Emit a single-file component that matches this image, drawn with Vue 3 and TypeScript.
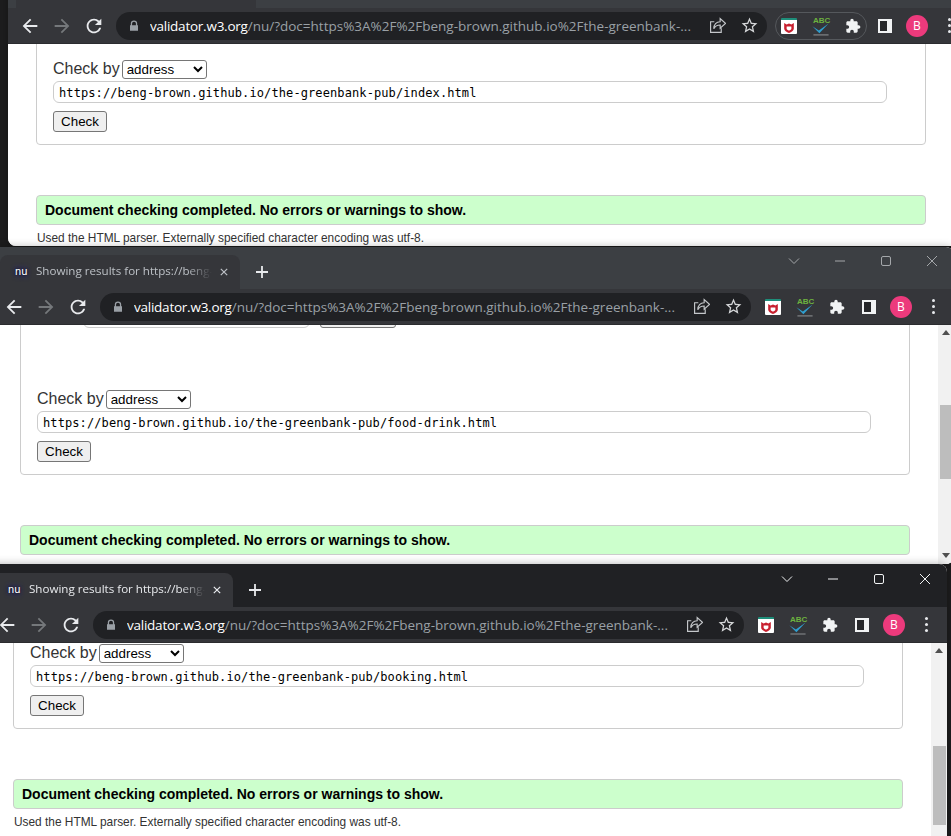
<script setup lang="ts">
interface BrowserWindow {
  id: string
  left: number
  top: number
  height: number
  scroll: number
  file: string
  focused: boolean
  pill: boolean
  hasTab: boolean
  hasNote: boolean
  thumbTop: number
  thumbHeight: number
}

const windows: BrowserWindow[] = [
  { id: 'w1', left: 8, top: -34, height: 280, scroll: -87, file: 'index.html', focused: false, pill: true, hasTab: false, hasNote: true, thumbTop: 60, thumbHeight: 74 },
  { id: 'w2', left: -8, top: 247, height: 317, scroll: -38, file: 'food-drink.html', focused: false, pill: false, hasTab: true, hasNote: false, thumbTop: 80, thumbHeight: 74 },
  { id: 'w3', left: -15, top: 564, height: 330, scroll: -102, file: 'booking.html', focused: true, pill: false, hasTab: true, hasNote: true, thumbTop: 103, thumbHeight: 79 }
]

const base = 'https://beng-brown.github.io/the-greenbank-pub/'
</script>

<template>
  <main class="desktop">
    <section
      v-for="win in windows"
      :key="win.id"
      class="window"
      :class="{ focused: win.focused }"
      :style="{ left: win.left + 'px', top: win.top + 'px', height: win.height + 'px' }"
    >
      <header class="tabstrip">
        <div class="tab">
          <template v-if="win.hasTab">
            <span class="favicon">nu</span>
            <span class="tab-title">Showing results for https://beng-</span>
            <svg class="tab-close" viewBox="0 0 10 10"><path d="M1 1l8 8M9 1l-8 8" /></svg>
          </template>
        </div>
        <svg class="new-tab" viewBox="0 0 12 12"><path d="M6 0v12M0 6h12" /></svg>
        <div class="controls">
          <svg viewBox="0 0 12 12"><path d="M1 3.5l5 5 5-5" /></svg>
          <svg viewBox="0 0 12 12"><path d="M1 6h10" /></svg>
          <svg viewBox="0 0 12 12"><rect x="1.5" y="1.5" width="9" height="9" rx="1.5" /></svg>
          <svg viewBox="0 0 12 12"><path d="M1 1l10 10M11 1L1 11" /></svg>
        </div>
      </header>

      <nav class="toolbar">
        <button class="tool">
          <svg class="nav-icon" viewBox="0 0 24 24"><path d="M20 11H7.83l5.59-5.59L12 4l-8 8 8 8 1.41-1.41L7.83 13H20v-2z" /></svg>
        </button>
        <button class="tool dim">
          <svg class="nav-icon" viewBox="0 0 24 24"><path d="M4 11h12.17l-5.59-5.59L12 4l8 8-8 8-1.41-1.41L16.17 13H4v-2z" /></svg>
        </button>
        <button class="tool">
          <svg class="nav-icon" viewBox="0 0 24 24"><path d="M17.65 6.35A7.958 7.958 0 0 0 12 4c-4.42 0-7.99 3.58-7.99 8s3.57 8 7.99 8c3.73 0 6.84-2.55 7.73-6h-2.08A5.99 5.99 0 0 1 12 18c-3.31 0-6-2.69-6-6s2.69-6 6-6c1.66 0 3.14.69 4.22 1.78L13 11h7V4l-2.35 2.35z" /></svg>
        </button>

        <div class="omnibox">
          <svg class="lock" viewBox="0 0 16 16"><path d="M4 7V5a4 4 0 0 1 8 0v2h1v7H3V7h1zm1.6 0h4.8V5a2.4 2.4 0 0 0-4.8 0v2z" /></svg>
          <span class="url"><b>validator.w3.org</b>/nu/?doc=https%3A%2F%2Fbeng-brown.github.io%2Fthe-greenbank-...</span>
          <button class="tool">
            <svg class="line-icon" viewBox="0 0 16 16"><path d="M5 4.500H1.500v10h10V10.500M4.500 11c0-4 2.500-6.500 6-6.500V1.500l5 4.500-5 4.500V7.500C8 7.500 5.800 8.500 4.500 11z" /></svg>
          </button>
          <button class="tool star">
            <svg class="star-icon" viewBox="0 0 24 24"><path d="M22 9.240l-7.190-.62L12 2 9.190 8.630 2 9.240l5.460 4.730L5.820 21 12 17.270 18.180 21l-1.630-7.030L22 9.240zM12 15.400l-3.760 2.270 1-4.280-3.320-2.880 4.380-.38L12 6.100l1.710 4.040 4.380.38-3.320 2.880 1 4.280L12 15.400z" /></svg>
          </button>
        </div>

        <div class="extensions" :class="{ pill: win.pill }">
          <button class="tool">
            <span class="mcafee">
              <svg viewBox="0 0 16 16"><path d="M2.500 3.500l2.800 1.600L8 4l2.700 1.100 2.800-1.600V10c0 2.200-2.800 3.700-5.500 4.800C5.300 13.700 2.500 12.200 2.500 10V3.500zM5.300 7.500v2.800C5.800 11 7 11.800 8 12.200c1-.4 2.200-1.200 2.700-1.900V7.500H5.300z" /></svg>
            </span>
          </button>
          <button class="tool">
            <span class="abc">
              <span class="abc-text">ABC</span>
              <svg viewBox="0 0 16 12"><path class="tick" d="M0 3l6 4 9-6.500-8.500 9L0 3z" /><path class="rule" d="M1 11h14" /></svg>
            </span>
          </button>
          <button class="tool">
            <svg class="puzzle" viewBox="0 0 24 24"><path d="M20.500 11H19V7c0-1.100-.9-2-2-2h-4V3.500C13 2.120 11.880 1 10.500 1S8 2.120 8 3.500V5H4c-1.100 0-1.990.9-1.990 2v3.800H3.500c1.490 0 2.700 1.210 2.700 2.700s-1.210 2.700-2.700 2.700H2V20c0 1.100.9 2 2 2h3.800v-1.500c0-1.490 1.210-2.700 2.700-2.700 1.490 0 2.700 1.210 2.700 2.700V22H17c1.100 0 2-.9 2-2v-4h1.500c1.380 0 2.500-1.120 2.500-2.500S21.880 11 20.500 11z" /></svg>
          </button>
        </div>
        <button class="tool"><span class="side-panel"></span></button>
        <button class="tool"><span class="avatar">B</span></button>
        <button class="tool"><span class="dots"><i></i><i></i><i></i></span></button>
      </nav>

      <div class="page">
        <div class="doc" :style="{ marginTop: win.scroll + 'px' }">
          <div class="box">
            <div class="prev-row">
              <span class="prev-input"></span>
              <span class="prev-button"></span>
            </div>
            <div class="check-by">
              <label>Check by</label>
              <select class="method"><option>address</option></select>
            </div>
            <input class="doc-url" type="text" readonly :value="base + win.file" />
            <button class="check">Check</button>
          </div>
          <p class="success">Document checking completed. No errors or warnings to show.</p>
          <p v-if="win.hasNote" class="note">Used the HTML parser. Externally specified character encoding was utf-8.</p>
        </div>
        <aside class="scrollbar">
          <span class="arrow up"></span>
          <span class="thumb" :style="{ top: win.thumbTop + 'px', height: win.thumbHeight + 'px' }"></span>
          <span class="arrow down"></span>
        </aside>
      </div>
    </section>
  </main>
</template>

<style>
html, body { margin: 0; background: #1d1d1e; overflow: hidden; }
</style>

<style scoped>
.desktop {
  position: relative;
  width: 951px;
  height: 836px;
  overflow: hidden;
  background: #1d1d1e;
  font-family: "Liberation Sans", Arial, sans-serif;
}
.window {
  position: absolute;
  width: 962px;
  display: flex;
  flex-direction: column;
  overflow: hidden;
  border-radius: 8px;
  background: #fff;
  box-shadow: 0 0 8px rgba(0, 0, 0, .3);
  --strip: #3c3f43;
  --tab-text: #bdc1c6;
  --control: #a4a7aa;
}
.window.focused {
  --strip: #202124;
  --tab-text: #e8eaed;
  --control: #f1f3f4;
}
button { font-family: inherit; }

.tabstrip {
  flex: 0 0 42px;
  position: relative;
  display: flex;
  align-items: flex-end;
  background: var(--strip);
  padding-left: 8px;
}
.focused .tabstrip { flex-basis: 43px; }
.tab {
  width: 240px;
  height: 34px;
  box-sizing: border-box;
  display: flex;
  align-items: center;
  padding: 0 0 1px 13px;
  background: #35363a;
  border-radius: 8px 8px 0 0;
  color: var(--tab-text);
  font: 11.600px "Open Sans", "Noto Sans", sans-serif;
}
.favicon {
  width: 16px;
  flex: none;
  font: 11px/12px "DejaVu Sans Mono", monospace;
  letter-spacing: -.3px;
  color: #fff;
  text-align: center;
  text-shadow: 0 0 3px #000, 0 -2px 4px #2d2a80, 0 2px 4px #2d2a80;
}
.tab-title {
  width: 176px;
  margin-left: 7px;
  padding-bottom: 2px;
  white-space: nowrap;
  overflow: hidden;
  -webkit-mask-image: linear-gradient(90deg, #000 86%, transparent);
  mask-image: linear-gradient(90deg, #000 86%, transparent);
}
.tab-close {
  width: 8px;
  height: 8px;
  margin-left: 8px;
  fill: none;
  stroke: var(--tab-text);
  stroke-width: 1.500;
}
.new-tab {
  width: 12px;
  height: 12px;
  margin: 0 0 11px 16px;
  fill: none;
  stroke: #e8eaed;
  stroke-width: 1.800;
}
.controls {
  position: absolute;
  top: 8px;
  left: 796px;
  display: flex;
  gap: 34px;
}
.focused .controls { top: 9px; }
.controls svg {
  width: 12px;
  height: 12px;
  fill: none;
  stroke: var(--control);
  stroke-width: 1;
}

.toolbar {
  flex: 0 0 36px;
  box-sizing: border-box;
  display: flex;
  align-items: center;
  padding-left: 6px;
  background: #35363a;
  border-bottom: 1px solid #2b2c2f;
}
.tool {
  width: 32px;
  height: 28px;
  flex: none;
  padding: 0;
  border: 0;
  background: none;
  display: flex;
  align-items: center;
  justify-content: center;
}
.nav-icon { width: 22px; height: 22px; fill: #e8eaed; }
.dim .nav-icon { fill: #75787b; }
.omnibox {
  width: 651px;
  height: 28px;
  flex: none;
  margin: 0 6px;
  display: flex;
  align-items: center;
  padding: 0 2px 0 10px;
  box-sizing: border-box;
  background: #202124;
  border-radius: 14px;
}
.lock { width: 16px; height: 16px; flex: none; fill: #9aa0a6; transform: scale(.8); }
.url {
  flex: 1;
  min-width: 0;
  margin-left: 8px;
  white-space: nowrap;
  overflow: hidden;
  font: 13.500px "Open Sans", "Noto Sans", sans-serif;
  color: #9aa0a6;
}
.url b { font-weight: 400; color: #fff; letter-spacing: -.24px; }
.line-icon { width: 17px; height: 17px; fill: none; stroke: #c4c7ca; stroke-width: 1.100; }
.star-icon { width: 19px; height: 19px; fill: #d5d7d9; }

.extensions { position: relative; display: flex; }
.extensions.pill::after {
  content: "";
  position: absolute;
  inset: 0 2px;
  border: 1px solid #55585c;
  border-radius: 14px;
}
.mcafee {
  width: 16px;
  height: 16px;
  display: block;
  background: #fff;
  border-top: 2px solid #1e8e7a;
  border-radius: 1px;
  box-sizing: border-box;
}
.mcafee svg { display: block; width: 14px; height: 14px; margin: 0 auto; fill: #c8202f; }
.abc {
  width: 16px;
  height: 16px;
  position: relative;
  display: block;
}
.abc-text {
  position: absolute;
  top: -2px;
  left: 0;
  width: 16px;
  text-align: center;
  font: bold 8px/9px "Liberation Sans", sans-serif;
  color: #6db33f;
}
.abc svg { position: absolute; left: -1px; top: 5px; width: 18px; height: 13px; }
.tick { fill: #2f9fd0; }
.rule { stroke: #8b8e90; stroke-width: 1; fill: none; }
.puzzle { width: 16px; height: 16px; fill: #f1f3f4; }
.side-panel {
  width: 14px;
  height: 14px;
  box-sizing: border-box;
  border: 2px solid #f1f3f4;
  border-right-width: 5px;
  background: #26272a;
}
.avatar {
  width: 22px;
  height: 22px;
  border-radius: 50%;
  background: #ec3a7c;
  color: #fff;
  font: 12px/22px "Open Sans", sans-serif;
  text-align: center;
}
.dots { display: flex; flex-direction: column; gap: 3px; }
.dots i { width: 3px; height: 3px; border-radius: 50%; background: #e8eaed; }

.page {
  flex: 1;
  min-height: 0;
  display: flex;
  overflow: hidden;
  background: #fff;
}
.doc {
  flex: 1;
  min-width: 0;
  box-sizing: border-box;
  padding: 0 28px;
  align-self: flex-start;
  color: #333;
}
.box {
  box-sizing: border-box;
  height: 188px;
  padding: 10px 16px 0;
  border: 1px solid #ccc;
  border-radius: 4px;
}
.prev-row {
  height: 30px;
  margin-bottom: 60px;
  display: flex;
  align-items: flex-end;
  gap: 10px;
  padding-left: 46px;
}
.prev-input {
  width: 227px;
  height: 20px;
  box-sizing: border-box;
  border: 1px solid #ccc;
  border-radius: 6px;
}
.prev-button {
  width: 76px;
  height: 20px;
  box-sizing: border-box;
  border: 1px solid #767676;
  border-radius: 3px;
  background: #efefef;
}
.check-by {
  height: 21px;
  display: flex;
  align-items: center;
  gap: 2px;
  font-size: 16px;
}
.method {
  align-self: flex-end;
  width: 85px;
  height: 19px;
  padding: 0;
  background: #fff;
  color: #000;
  border: 1px solid #767676;
  border-radius: 3px;
  font: 13.330px "Liberation Sans", sans-serif;
}
.doc-url {
  display: block;
  width: 834px;
  height: 22px;
  box-sizing: border-box;
  margin: 2px 0 8px;
  padding: 2px 5px 0;
  border: 1px solid #ccc;
  border-radius: 6px;
  outline: 0;
  color: #000;
  font: 12px "DejaVu Sans Mono", monospace;
  letter-spacing: .1px;
}
.check {
  display: block;
  width: 54px;
  height: 21px;
  padding: 0;
  color: #000;
  background: #efefef;
  border: 1px solid #767676;
  border-radius: 3px;
  font-size: 13.330px;
}
.success {
  box-sizing: border-box;
  height: 30px;
  margin: 50px 0 0;
  padding-left: 8px;
  background: #ccffcc;
  border: 1px solid #ccc;
  border-radius: 4px;
  color: #000;
  font: bold 14px/28px "Liberation Sans", sans-serif;
}
.note {
  margin: 6px 0 0 1px;
  font-size: 11.880px;
  line-height: 15px;
  color: #333;
}
.scrollbar {
  position: relative;
  flex: 0 0 16px;
  display: flex;
  flex-direction: column;
  justify-content: space-between;
  background: #f1f1f1;
}
.arrow {
  display: block;
  height: 16px;
  position: relative;
}
.arrow::before {
  content: "";
  position: absolute;
  left: 4px;
  top: 5px;
  border: 4px solid transparent;
}
.arrow.up::before { border-bottom: 5px solid #505050; border-top: 0; }
.arrow.down::before { border-top: 5px solid #505050; border-bottom: 0; }
.thumb {
  position: absolute;
  left: 2px;
  right: 1px;
  background: #bdbdbd;
}
</style>
